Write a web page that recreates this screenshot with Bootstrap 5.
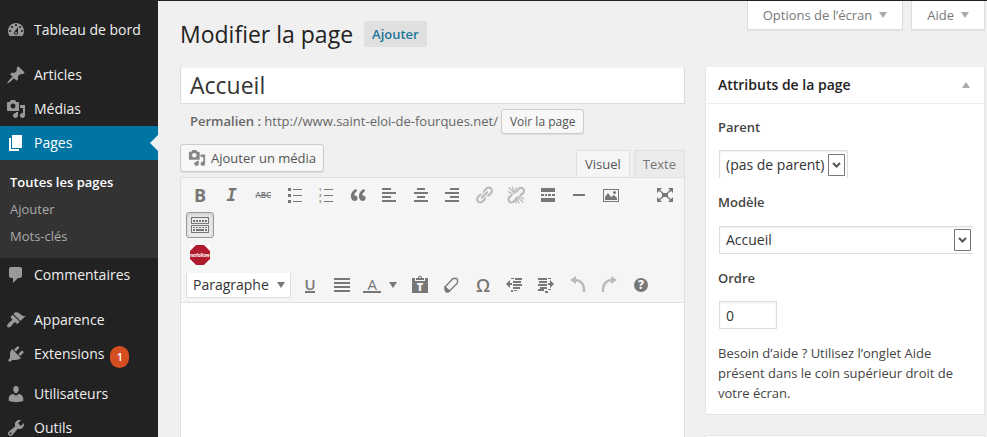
<!DOCTYPE html>
<html lang="fr">
<head>
<meta charset="utf-8">
<meta name="viewport" content="width=device-width, initial-scale=1">
<title>Modifier la page</title>
<link href="https://cdn.jsdelivr.net/npm/bootstrap@5.3.0/dist/css/bootstrap.min.css" rel="stylesheet">
<style>
body{font-family:"Open Sans",sans-serif;font-size:13px;line-height:20px;color:#444;background:#f0f0f0;border-top:1px solid #222}
svg{display:block;fill:currentColor}
.ico{width:20px;height:20px;flex:none}
/* admin menu */
.side{width:158px;background:#222;padding-top:12px}
.side a{text-decoration:none}
.side-link{height:34px;padding-left:6px;gap:8px;font-size:14px;color:#eee}
.side-link .ico{color:#999}
.side-link.current{background:#0074a2;color:#fff}
.side-link.current .ico{color:#fff}
.side-link.current::after{content:"";margin-left:auto;border:8px solid transparent;border-right-color:#f0f0f0;border-left:0}
.side-gap{margin-top:11px}
.side-sub{background:#333;padding:9px 0 8px 10px}
.side-sub a{display:block;line-height:27px;color:#aaa}
.side-sub a.on{color:#fff;font-weight:600}
.side-plug{margin-bottom:6px}
.count{background:#d54e21;color:#fff;font-size:11px;font-weight:600;width:19px;height:22px;line-height:22px;border-radius:10px;text-align:center;margin:6px 0 0 -2px}
/* header */
.area{padding:0 2px 0 22px}
.head-title{gap:11px;padding:18px 0}
.title{font-size:23px;line-height:30px;font-weight:400;color:#222}
.add-new{background:#e0e0e0;color:#21759b;font-weight:600;line-height:26px;padding:0 8px;border-radius:2px;text-decoration:none}
.meta-tab{background:#fff;border:1px solid #ddd;border-top:0;color:#777;height:29px;padding:0 15px;gap:7px;box-shadow:0 1px 1px #0000000a}
.tri{border:4px solid transparent;border-top:6px solid #aaa;border-bottom:0}
.tri-up{border:4px solid transparent;border-bottom:6px solid #aaa;border-top:0}
.tri-sm{border:4px solid transparent;border-top:6px solid #777;border-bottom:0}
/* editor */
.headline{height:37px;font-size:23px;color:#333;border:1px solid #ddd;border-top:0;padding:0 9px;background:#fff;box-shadow:inset 0 1px 2px #00000012;min-width:0}
.wbtn{background:#f7f7f7;border:1px solid #ccc;border-radius:3px;color:#555;box-shadow:0 1px 0 #00000014}
.permalink{margin:5px 0 10px 10px;gap:3px;color:#666}
.permalink span{padding-bottom:2px}
.view-btn{height:25px;padding:0 8px;font-size:12px}
.media-btn{height:28px;padding:0 7px;gap:5px;margin-bottom:5px}
.media-btn .ico{width:18px;height:18px;color:#888}
.mode{border:1px solid #e0e0e0;border-bottom:0;background:#ebebeb;color:#777;height:27px;padding:0 8px;font-size:13px}
.mode.on{background:#f5f5f5;color:#555;height:28px;margin-bottom:-1px;padding-bottom:2px}
.editor{border:1px solid #e0e0e0;border-bottom:0;background:#fff}
.bars{background:#f5f5f5;border-bottom:1px solid #e0e0e0;padding:2px 5px 2px}
.tool-row{height:30px}
.tool{width:28px;height:26px;border:0;background:none;color:#777;padding:0;display:flex;align-items:center;justify-content:center;flex:none}
.tool.pressed{background:#ebebeb;border:1px solid #999;border-radius:3px;color:#777;box-shadow:inset 0 2px 4px #00000020}
.tool.off{color:#bbb}
.tool.split{width:43px;gap:8px;padding-right:1px}
.t-bold{font-size:18px;font-weight:700}
.t-ital{font-family:"DejaVu Sans Mono","Liberation Mono",monospace;font-size:17px;font-style:italic;font-weight:700}
.t-abc{font-size:8px;font-weight:600;text-decoration:line-through}
.t-under{font-size:15px;line-height:14px;border-bottom:2px solid;width:10px;font-weight:600;display:flex;justify-content:center}
.t-color{font-size:15px;line-height:14px;border-bottom:2px solid;width:18px;font-weight:400}
.t-omega{font-size:18px;font-weight:600}
.pad-full{margin-right:26px}
.pad-end{margin-right:24px;margin-left:5px}
.format{width:105px;height:25px;border:1px solid #ddd;border-top:0;background:#fff url("data:image/svg+xml,%3Csvg xmlns='http://www.w3.org/2000/svg' viewBox='0 0 8 6'%3E%3Cpath fill='%23777' d='M0 0h8L4 6z'/%3E%3C/svg%3E") no-repeat right 5px center/8px 6px;font-size:14px;color:#333;appearance:none;padding:0 0 0 6px}
/* page attributes */
.rail{width:280px;flex:none}
.panel{background:#fff;border:1px solid #e5e5e5}
.panel.first{border-top:0;margin-bottom:20px}
.panel-head{height:37px;border-bottom:1px solid #eee;padding:0 14px 0 12px}
.panel-head h2{font-size:14px;font-weight:600;color:#222;line-height:20px}
.panel-body{padding:13px 12px 11px;line-height:20px}
.panel-body label{display:block;font-weight:600}
.field{display:block;height:28px;border:1px solid #ddd;background-color:#fff;box-shadow:inset 0 1px 2px #00000012;color:#333;font-size:14px;padding:0 6px;appearance:none;margin:13px 0 14px 1px}
select.field{background-image:url("data:image/svg+xml,%3Csvg xmlns='http://www.w3.org/2000/svg' viewBox='0 0 17 22'%3E%3Cpath fill='%23fff' stroke='%23777' d='M.5.5h16v21H.5z'/%3E%3Cpath fill='none' stroke='%23555' stroke-width='2' d='M5 9l3.500 3.500L12 9'/%3E%3C/svg%3E");background-repeat:no-repeat;background-position:right 2px center;background-size:17px 22px;padding-right:22px}
.f-parent{width:129px;border-bottom:0}
.f-model{width:254px;border-right:0;margin:14px 0 14px 1px}
.f-order{width:58px}
</style>
<script src="https://cdn.jsdelivr.net/npm/bootstrap@5.3.0/dist/js/bootstrap.bundle.min.js"></script>
</head>
<body class="d-flex vh-100 overflow-hidden">
<svg class="d-none" xmlns="http://www.w3.org/2000/svg">
<symbol id="i-media" viewBox="0 0 20 20"><path d="M13 11V4c0-.55-.45-1-1-1h-1.670L9 1H5L3.670 3H2c-.55 0-1 .45-1 1v7c0 .55.45 1 1 1h10c.55 0 1-.45 1-1zM7 4.500c1.380 0 2.500 1.120 2.500 2.500S8.380 9.500 7 9.500 4.500 8.380 4.500 7 5.620 4.500 7 4.500zM14 6h5v10.500c0 1.380-1.120 2.500-2.500 2.500S14 17.880 14 16.500s1.120-2.500 2.500-2.500c.17 0 .34.02.5.05V9h-3V6zm-4 8.050V13h2v3.500c0 1.380-1.120 2.500-2.500 2.500S7 17.880 7 16.500 8.120 14 9.500 14c.17 0 .34.02.5.05z"/></symbol>
</svg>

<nav class="side flex-shrink-0" aria-label="Administration">
<a href="#" class="side-link d-flex align-items-center"><svg class="ico" viewBox="0 0 20 20"><path fill-rule="evenodd" d="M3.760 16h12.480c1.100-1.370 1.760-3.110 1.760-5 0-4.420-3.580-8-8-8s-8 3.580-8 8c0 1.890.66 3.630 1.760 5zM10 4c.55 0 1 .45 1 1s-.45 1-1 1-1-.45-1-1 .45-1 1-1zM6 6c.55 0 1 .45 1 1s-.45 1-1 1-1-.45-1-1 .45-1 1-1zm8 0c.55 0 1 .45 1 1s-.45 1-1 1-1-.45-1-1 .45-1 1-1zm-5.370 5.550L12 7v6c0 1.100-.9 2-2 2s-2-.9-2-2c0-.57.24-1.080.63-1.450zM4 10c.55 0 1 .45 1 1s-.45 1-1 1-1-.45-1-1 .45-1 1-1zm12 0c.55 0 1 .45 1 1s-.45 1-1 1-1-.45-1-1 .45-1 1-1zm-5 3c0-.55-.45-1-1-1s-1 .45-1 1 .45 1 1 1 1-.45 1-1z"/></svg>Tableau de bord</a>
<a href="#" class="side-link side-gap d-flex align-items-center"><svg class="ico" viewBox="0 0 20 20"><path d="M10.440 3.020l1.820-1.820 6.360 6.350-1.830 1.820c-1.050-.68-2.480-.57-3.410.36l-.75.75c-.92.93-1.040 2.350-.35 3.410l-1.830 1.820-2.410-2.410-2.800 2.790c-.42.42-3.380 2.710-3.800 2.290s1.860-3.390 2.280-3.810l2.790-2.790L4.100 9.360l1.830-1.820c1.050.69 2.480.57 3.400-.36l.75-.75c.93-.92 1.050-2.350.36-3.410z"/></svg>Articles</a>
<a href="#" class="side-link d-flex align-items-center"><svg class="ico"><use href="#i-media"/></svg>Médias</a>
<a href="#" class="side-link current d-flex align-items-center"><svg class="ico" viewBox="0 0 20 20"><path d="M6 15V2h10v13H6zm-1 1h8v2H3V5h2v11z"/></svg>Pages</a>
<div class="side-sub"><a href="#" class="on">Toutes les pages</a><a href="#">Ajouter</a><a href="#">Mots-clés</a></div>
<a href="#" class="side-link d-flex align-items-center"><svg class="ico" viewBox="0 0 20 20"><path d="M5 2h9c1.100 0 2 .9 2 2v7c0 1.100-.9 2-2 2h-2l-5 5v-5H5c-1.100 0-2-.9-2-2V4c0-1.100.9-2 2-2z"/></svg>Commentaires</a>
<a href="#" class="side-link side-gap d-flex align-items-center"><svg class="ico" viewBox="0 0 20 20"><path d="M14.480 11.060L7.410 3.990l1.500-1.500c.5-.56 2.300-.47 3.510.32 1.210.8 1.430 1.280 2.910 2.100 1.180.64 2.450 1.260 4.450.85zm-.71.71L6.700 4.700 4.930 6.470c-.39.39-.39 1.020 0 1.410l1.060 1.060c.39.39.39 1.030 0 1.420-.6.6-1.430 1.110-2.210 1.690-.35.26-.7.53-1.010.84C1.430 14.230.4 16.080 1.400 17.070c.99 1 2.840-.03 4.180-1.360.31-.31.58-.66.85-1.020.57-.78 1.080-1.610 1.690-2.210.39-.39 1.020-.39 1.410 0l1.060 1.060c.39.39 1.020.39 1.410 0z"/></svg>Apparence</a>
<a href="#" class="side-link side-plug d-flex align-items-center"><svg class="ico" viewBox="0 0 20 20"><path d="M13.110 4.360L9.870 7.600 8 5.730l3.240-3.240c.35-.34 1.050-.2 1.560.32.52.51.66 1.210.31 1.550zm-8 1.770l.91-1.120 9.010 9.010-1.190.84c-.71.71-2.630 1.160-3.820 1.160H6.140L4.900 17.260c-.59.59-1.540.59-2.120 0-.59-.58-.59-1.530 0-2.120l1.240-1.240v-3.880c0-1.130.4-3.190 1.090-3.890zm7.260 3.970l3.240-3.240c.34-.35 1.040-.21 1.550.31.52.51.66 1.210.31 1.550l-3.240 3.250z"/></svg>Extensions<span class="count">1</span></a>
<a href="#" class="side-link d-flex align-items-center"><svg class="ico" viewBox="0 0 20 20"><path d="M10 9.250c-2.270 0-2.730-3.440-2.730-3.440C7 4.020 7.820 2 9.970 2c2.160 0 2.980 2.020 2.710 3.810 0 0-.41 3.440-2.680 3.440zm0 2.570L12.720 10c2.390 0 4.520 2.330 4.520 4.530v2.490s-3.650 1.130-7.240 1.130c-3.650 0-7.240-1.130-7.240-1.130v-2.490c0-2.250 1.940-4.480 4.470-4.480z"/></svg>Utilisateurs</a>
<a href="#" class="side-link d-flex align-items-center"><svg class="ico" viewBox="0 0 20 20"><path d="M16.680 9.770c-1.340 1.340-3.300 1.670-4.950.99l-5.410 6.520c-.99.99-2.590.99-3.580 0s-.99-2.590 0-3.570l6.520-5.420c-.68-1.650-.35-3.610.99-4.950 1.280-1.280 3.120-1.620 4.720-1.060l-2.890 2.890 2.820 2.820 2.860-2.870c.53 1.580.18 3.390-1.080 4.650zM3.810 16.210c.4.39 1.040.39 1.430 0 .4-.4.4-1.040 0-1.430-.39-.4-1.030-.4-1.430 0-.39.39-.39 1.030 0 1.430z"/></svg>Outils</a>
</nav>

<div class="area flex-fill d-flex flex-column">
<header class="d-flex align-items-start">
<div class="head-title d-flex align-items-center me-auto">
<h1 class="title m-0">Modifier la page</h1>
<a href="#" class="add-new">Ajouter</a>
</div>
<button class="meta-tab d-flex align-items-center me-2">Options de l’écran <i class="tri"></i></button>
<button class="meta-tab d-flex align-items-center">Aide <i class="tri"></i></button>
</header>

<div class="d-flex flex-fill">
<main class="flex-fill d-flex flex-column me-3 pe-1">
<input class="headline w-100" type="text" value="Accueil" aria-label="Titre">
<div class="permalink d-flex align-items-center">
<span><strong class="fw-semibold">Permalien :</strong> http://www.saint-eloi-de-fourques.net/</span>
<button class="wbtn view-btn">Voir la page</button>
</div>
<div class="d-flex align-items-end">
<button class="wbtn media-btn d-flex align-items-center me-auto"><svg class="ico"><use href="#i-media"/></svg>Ajouter un média</button>
<button class="mode on me-1">Visuel</button>
<button class="mode">Texte</button>
</div>
<section class="editor flex-fill">
<div class="bars">
<div class="tool-row d-flex align-items-center">
<div class="d-flex flex-fill justify-content-between align-items-center pad-full">
<button class="tool t-bold" title="Gras">B</button>
<button class="tool t-ital" title="Italique">I</button>
<button class="tool t-abc" title="Barré">ABC</button>
<button class="tool" aria-label="Liste à puces"><svg class="ico" viewBox="0 0 20 20"><path d="M3 3h3v3H3zM3 9h3v3H3zM3 15h3v3H3zM8 4h9v1H8zM8 10h9v1H8zM8 16h9v1H8z"/></svg></button>
<button class="tool" aria-label="Liste numérotée"><svg class="ico" viewBox="0 0 20 20"><g font-family="Open Sans" font-size="4" font-weight="700"><text x="3" y="6">1</text><text x="3" y="12">2</text><text x="3" y="18">3</text></g><path d="M8 4h9v1H8zM8 10h9v1H8zM8 16h9v1H8z"/></svg></button>
<button class="tool" aria-label="Citation"><svg class="ico" viewBox="0 0 20 20"><path d="M9.490 13.220c0-.74-.2-1.380-.61-1.900-.62-.78-1.830-.88-2.530-.72-.29-1.650 1.110-3.750 2.920-4.650L7.880 4c-2.730 1.300-5.420 4.280-4.960 8.050C3.210 14.430 4.590 16 6.540 16c.85 0 1.560-.25 2.120-.75s.83-1.180.83-2.030zm8.050 0c0-.74-.2-1.380-.61-1.900-.63-.78-1.830-.88-2.530-.72-.29-1.650 1.110-3.750 2.920-4.650L15.930 4c-2.730 1.300-5.410 4.280-4.950 8.050.29 2.380 1.660 3.950 3.610 3.950.85 0 1.560-.25 2.120-.75s.83-1.180.83-2.030z"/></svg></button>
<button class="tool" aria-label="Aligner à gauche"><svg class="ico" viewBox="0 0 20 20"><path d="M2 3h9v2H2zM2 7h14v2H2zM2 11h9v2H2zM2 15h14v2H2z"/></svg></button>
<button class="tool" aria-label="Centrer"><svg class="ico" viewBox="0 0 20 20"><path d="M6 3h8v2H6zM3 7h14v2H3zM6 11h8v2H6zM3 15h14v2H3z"/></svg></button>
<button class="tool" aria-label="Aligner à droite"><svg class="ico" viewBox="0 0 20 20"><path d="M7 3h9v2H7zM2 7h14v2H2zM7 11h9v2H7zM2 15h14v2H2z"/></svg></button>
<button class="tool off" aria-label="Lien"><svg class="ico" viewBox="0 0 20 20"><path d="M17.740 2.760c1.680 1.690 1.680 4.410 0 6.100l-1.530 1.520c-1.120 1.120-2.700 1.470-4.140 1.090l2.620-2.610.76-.77.76-.76c.84-.84.84-2.200 0-3.040-.84-.85-2.200-.85-3.040 0l-.77.76-3.380 3.380c-.37-1.440-.02-3.020 1.100-4.140l1.520-1.530c1.690-1.680 4.420-1.680 6.100 0zM8.590 13.430l5.340-5.340c.42-.42.42-1.100 0-1.520-.44-.43-1.130-.39-1.530 0l-5.330 5.340c-.42.42-.42 1.100 0 1.520.44.43 1.130.39 1.520 0zm-.76 2.290l4.140-4.150c.38 1.440.03 3.020-1.090 4.140l-1.520 1.530c-1.690 1.680-4.410 1.680-6.100 0-1.680-1.680-1.680-4.420 0-6.100l1.530-1.520c1.120-1.120 2.700-1.470 4.140-1.100l-4.140 4.150c-.85.84-.85 2.200 0 3.050.84.84 2.200.84 3.040 0z"/></svg></button>
<button class="tool off" aria-label="Retirer le lien"><svg class="ico" viewBox="0 0 20 20" fill="none" stroke="currentColor"><path fill="none" stroke-width="2.200" d="M10 7l2.500-3c1.500-1.500 3.500-1.300 4.600-.2 1.200 1.200 1.200 3.200 0 4.400L14 10.500M10.500 13.500L8 16.300c-1.500 1.500-3.500 1.300-4.600.2-1.200-1.200-1.200-3.200 0-4.400L6 10"/><path stroke-width="1.300" d="M9 8.500L2.500 2.500M8.500 7L6 1.500M7.500 9.500L2 6.500M11 11.500l6.500 6M12.500 11l5.500 3M10.500 12.500l2.700 6M10 12v6.500M10 8V2.500"/></svg></button>
<button class="tool" aria-label="Lire la suite"><svg class="ico" viewBox="0 0 20 20"><path d="M3 3h14v4H3zM3 9h3v2H3zM7 9h2v2H7zM10 9h3v2h-3zM14 9h3v2h-3zM3 13h14v4H3z"/></svg></button>
<button class="tool" aria-label="Ligne horizontale"><svg class="ico" viewBox="0 0 20 20"><path d="M4 9h12v2H4z"/></svg></button>
<button class="tool" aria-label="Image"><svg class="ico" viewBox="0 0 20 20"><path fill-rule="evenodd" d="M2 4h16v13H2zM3 5v11h14V5zM4 15V12l3-4 3 4 3-2 3 3v2z"/><circle cx="13.500" cy="7.500" r="1.500"/></svg></button>
</div>
<button class="tool" aria-label="Plein écran"><svg class="ico" viewBox="0 0 20 20"><path d="M2 3h5L2 8zM18 3v5l-5-5zM2 17v-5l5 5zM18 17h-5l5-5zM7 8h6v4H7z"/><path stroke="currentColor" stroke-width="1.300" d="M3 4l5 4.500M17 4l-5 4.500M3 16l5-4.500M17 16l-5-4.500"/></svg></button>
</div>
<div class="tool-row d-flex align-items-center"><button class="tool pressed" aria-label="Ouvrir la barre d’outils" aria-pressed="true"><svg class="ico" viewBox="0 0 20 20"><path fill-rule="evenodd" d="M1 2h18v7H1zM2 3v5h16V3zM3 5h2v2H3zM6 5h2v2H6zM9 5h2v2H9zM12 5h2v2h-2zM15 5h2v2h-2zM1 10h18v8H1zM2 11v6h16v-6zM3 12h2v1H3zM6 12h2v1H6zM9 12h2v1H9zM12 12h2v1h-2zM15 12h2v1h-2zM3 14h2v2H3zM6 14h8v2H6zM15 14h2v2h-2z"/></svg></button></div>
<div class="tool-row d-flex align-items-center"><button class="tool" aria-label="Nofollow"><svg class="ico" viewBox="0 0 20 20"><path fill="#fff" d="M0 0h20v20H0z"/><path fill="#b01c2e" d="M6 0h8l6 6v8l-6 6H6l-6-6V6z"/><text x="10" y="12" text-anchor="middle" fill="#fff" font-family="Roboto" font-weight="700" font-size="5">nofollow</text></svg></button></div>
<div class="tool-row d-flex align-items-center">
<select class="format" aria-label="Format"><option>Paragraphe</option></select>
<div class="d-flex flex-fill justify-content-between align-items-center pad-end">
<button class="tool" title="Souligné"><span class="t-under">U</span></button>
<button class="tool" aria-label="Justifier"><svg class="ico" viewBox="0 0 20 20"><path d="M2 3h16v2H2zM2 7h16v2H2zM2 11h16v2H2zM2 15h16v2H2z"/></svg></button>
<button class="tool split" title="Couleur du texte"><span class="t-color">A</span><i class="tri-sm"></i></button>
<button class="tool" aria-label="Coller en texte"><svg class="ico" viewBox="0 0 20 20"><path fill-rule="evenodd" d="M2 3h3v3h10V3h3v15H2zM6 5V3h2c0-3 4-3 4 0h2v2zM9 2v1h2V2z"/><text x="10" y="16" text-anchor="middle" fill="#f5f5f5" font-family="Open Sans" font-weight="800" font-size="11">T</text></svg></button>
<button class="tool" aria-label="Effacer la mise en forme"><svg class="ico" viewBox="0 0 20 20"><path fill="none" stroke="currentColor" stroke-width="1.300" stroke-linejoin="round" d="M4 12l8-8.500h3.500l1 1V8L8.500 16z"/><path d="M3.300 11l5.900 5-1.700 1.700H5L3.300 15z"/></svg></button>
<button class="tool t-omega" title="Caractère spécial">Ω</button>
<button class="tool" aria-label="Diminuer le retrait"><svg class="ico" viewBox="0 0 20 20"><path d="M6 3h3v1H6zM10 3h7v2h-7zM8 6h8v2H8zM8 9h9v2H8zM8 12h7v2H8zM6 15h2v2H6zM9 15h3v1H9zM1 9l4-4v3h2v2H5v3z"/></svg></button>
<button class="tool" aria-label="Augmenter le retrait"><svg class="ico" viewBox="0 0 20 20"><path d="M2 3h9v2H2zM12 3h3v1h-3zM3 6h8v2H3zM2 9h9v2H2zM4 12h7v2H4zM2 14h6v2H2zM9 16h3v2H9zM12 14h3v1h-3zM18 9l-4-4v3h-2v2h2v3z"/></svg></button>
<button class="tool off" aria-label="Annuler"><svg class="ico" viewBox="0 0 20 20"><path d="M2 5l6-4v8z"/><path fill="none" stroke="currentColor" stroke-width="2.500" d="M7 5.200c6-.2 9.500 4 9 12"/></svg></button>
<button class="tool off" aria-label="Rétablir"><svg class="ico" viewBox="0 0 20 20"><path d="M18 5l-6-4v8z"/><path fill="none" stroke="currentColor" stroke-width="2.500" d="M13 5.200c-6-.2-9.500 4-9 12"/></svg></button>
<button class="tool" aria-label="Aide"><svg class="ico" viewBox="0 0 20 20"><circle cx="10" cy="10" r="7"/><text x="10" y="14" text-anchor="middle" fill="#f5f5f5" font-family="Open Sans" font-weight="800" font-size="12">?</text></svg></button>
</div>
</div>
</div>
</section>
</main>

<aside class="rail d-flex flex-column">
<section class="panel first">
<div class="panel-head d-flex align-items-center justify-content-between"><h2 class="m-0">Attributs de la page</h2><i class="tri-up"></i></div>
<div class="panel-body">
<label for="parent">Parent</label>
<select id="parent" class="field f-parent"><option>(pas de parent)</option></select>
<label for="model">Modèle</label>
<select id="model" class="field f-model"><option>Accueil</option></select>
<label for="order">Ordre</label>
<input id="order" class="field f-order" type="text" value="0">
<p class="m-0">Besoin d’aide ? Utilisez l’onglet Aide présent dans le coin supérieur droit de votre écran.</p>
</div>
</section>
<section class="panel flex-fill border-bottom-0"></section>
</aside>
</div>
</div>
</body>
</html>
